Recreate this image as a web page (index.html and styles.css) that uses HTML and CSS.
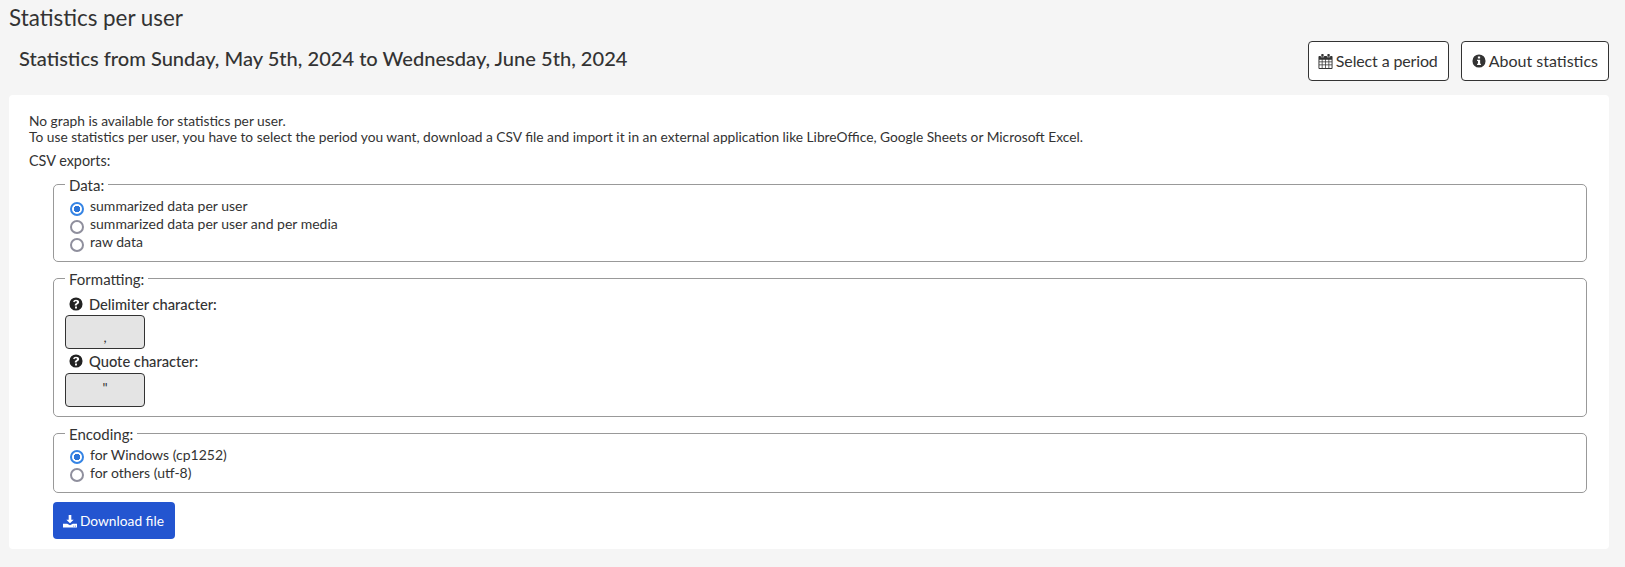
FILE: index.html
```html
<!DOCTYPE html>
<html lang="en">
<head>
<meta charset="utf-8">
<title>Statistics per user</title>
<link rel="stylesheet" href="styles.css">
</head>
<body>
<h1 class="page-title">Statistics per user</h1>
<div class="header-row">
  <h2 class="period-title">Statistics from Sunday, May 5th, 2024 to Wednesday, June 5th, 2024</h2>
  <div class="header-actions">
    <a class="btn btn-period" href="#"><svg class="icon" viewBox="0 0 16 16"><path fill="currentColor" fill-rule="evenodd" d="M4 0h1.500a.5.5 0 0 1 .5.5V3H3.500V.5A.5.5 0 0 1 4 0zm6.500 0H12a.5.5 0 0 1 .5.5V3H10V.5a.5.5 0 0 1 .5-.5zM1.500 2H3v1.500h3.500V2h3v1.500h3.500V2h1.500A1 1 0 0 1 15.500 3v12a1 1 0 0 1-1 1h-13a1 1 0 0 1-1-1V3a1 1 0 0 1 1-1zM1.500 6v2h2.500V6zm3.300 0v2h2.800V6zm3.600 0v2h2.800V6zm3.600 0v2h2.500V6zM1.500 8.800v2.400h2.500V8.800zm3.300 0v2.400h2.800V8.800zm3.600 0v2.400h2.800V8.800zm3.600 0v2.400h2.500V8.800zM1.500 12v3h2.500v-3zm3.300 0v3h2.800v-3zm3.600 0v3h2.800v-3zm3.600 0v3h2.500v-3z"/></svg>Select a period</a>
    <a class="btn btn-about" href="#"><svg class="icon icon-round" viewBox="0 0 16 16"><path fill="currentColor" fill-rule="evenodd" d="M8 .5a7.500 7.500 0 1 1 0 15 7.500 7.500 0 0 1 0-15zM6.700 2.800v2.400h2.600V2.800zM5.800 6.500v1.500h1v3H5.800v1.600h4.400V11H9.300V6.500z"/></svg>About statistics</a>
  </div>
</div>
<main class="panel">
  <p class="intro">No graph is available for statistics per user.<br>To use statistics per user, you have to select the period you want, download a CSV file and import it in an external application like LibreOffice, Google Sheets or Microsoft Excel.</p>
  <p class="exports">CSV exports:</p>
  <form class="export-form">
    <fieldset class="group group-data">
      <legend>Data:</legend>
      <label class="radio"><input type="radio" name="data" checked><span>summarized data per user</span></label>
      <label class="radio"><input type="radio" name="data"><span>summarized data per user and per media</span></label>
      <label class="radio"><input type="radio" name="data"><span>raw data</span></label>
    </fieldset>
    <fieldset class="group group-format">
      <legend>Formatting:</legend>
      <div class="field-label"><svg class="help" viewBox="0 0 16 16"><path fill="currentColor" fill-rule="evenodd" d="M8 .5a7.500 7.500 0 1 1 0 15 7.500 7.500 0 0 1 0-15zM8 3C6.300 3 5.100 3.900 4.600 5.200l1.500.9c.4-.8.900-1.300 1.800-1.300.7 0 1.300.4 1.300 1 0 .5-.4.800-1.100 1.200-.8.400-1.500 1-1.500 2.200v.4h2.200v-.2c0-.5.400-.8 1-1.200.9-.5 1.800-1.100 1.800-2.500C11.600 4 9.800 3 8 3zM6.900 10.800v2.200h2.200v-2.200z"/></svg><span>Delimiter character:</span></div>
      <input class="char-input char-low" type="text" value="," readonly>
      <div class="field-label field-label-tall"><svg class="help" viewBox="0 0 16 16"><path fill="currentColor" fill-rule="evenodd" d="M8 .5a7.500 7.500 0 1 1 0 15 7.500 7.500 0 0 1 0-15zM8 3C6.300 3 5.100 3.900 4.600 5.200l1.500.9c.4-.8.900-1.300 1.800-1.300.7 0 1.300.4 1.300 1 0 .5-.4.800-1.100 1.200-.8.400-1.500 1-1.500 2.200v.4h2.200v-.2c0-.5.400-.8 1-1.200.9-.5 1.800-1.100 1.800-2.500C11.600 4 9.800 3 8 3zM6.900 10.800v2.200h2.200v-2.200z"/></svg><span>Quote character:</span></div>
      <input class="char-input" type="text" value="&quot;" readonly>
    </fieldset>
    <fieldset class="group group-encoding">
      <legend>Encoding:</legend>
      <label class="radio"><input type="radio" name="enc" checked><span>for Windows (cp1252)</span></label>
      <label class="radio"><input type="radio" name="enc"><span>for others (utf-8)</span></label>
    </fieldset>
    <button class="btn-primary" type="button"><svg class="icon-dl" viewBox="0 0 16 16"><path fill="currentColor" fill-rule="evenodd" d="M6.500 1h3v5.500h2.700L8 10.700 3.800 6.500h2.700zM0 11h4.800L8 12.800 11.200 11H16v4.500H0zm11.800 2.300v1h1v-1zm2 0v1h1v-1z"/></svg>Download file</button>
  </form>
</main>
</body>
</html>
```
FILE: styles.css
```css
* { box-sizing: border-box; }
html, body { height: 100%; }
body {
  margin: 0;
  padding: 0 16px 0 9px;
  background: #f5f5f5;
  color: #333;
  font-family: Lato, "Liberation Sans", sans-serif;
  font-size: 13.76px;
  line-height: 16px;
  overflow: hidden;
}
.page-title {
  margin: 0;
  padding-top: 4px;
  height: 36px;
  font-size: 22.4px;
  line-height: 28px;
  font-weight: 400;
}
.header-row {
  display: flex;
  justify-content: space-between;
  align-items: flex-start;
  height: 59px;
}
.period-title {
  margin: 8px 0 0 10px;
  font-size: 20.08px;
  line-height: 28px;
  font-weight: 500;
}
.header-actions { display: flex; gap: 12px; padding-top: 5px; }
.btn {
  display: flex;
  align-items: center;
  height: 40px;
  padding: 0 10px 0 9px;
  border: 1px solid #333;
  border-radius: 4px;
  background: #fff;
  color: #333;
  font-size: 16px;
  text-decoration: none;
}
.btn-period { letter-spacing: -0.14px; }
.btn-about { padding-left: 10px; }
.icon { width: 15px; height: 15px; margin-right: 3px; flex: none; }
.icon-round { width: 14px; height: 14px; }
.panel {
  height: 454px;
  padding: 18px 20px 0;
  background: #fff;
  border-radius: 4px;
}
.intro { margin: 0; }
.exports { margin: 8px 0 0; font-size: 14.4px; }
.export-form { padding: 0 2px 0 24px; }
.group {
  margin: 0;
  padding: 7px 16px 9px;
  border: 1px solid #999;
  border-radius: 5px;
  min-width: 0;
}
.group legend {
  height: 14px;
  padding: 0 4px;
  margin-left: -5px;
  font-size: 15px;
  line-height: 16px;
}
.group-data { margin-top: 8px; padding-top: 6.500px; padding-bottom: 9.500px; }
.group-data .radio span { margin-bottom: 2px; }
.group-format { margin-top: 9px; padding-top: 8px; padding-bottom: 8px; }
.group-encoding { margin-top: 9px; padding-top: 6px; padding-bottom: 10px; }
.radio { display: flex; align-items: center; gap: 6px; height: 18px; font-size: 14px; line-height: 18px; }
.radio input {
  appearance: none;
  margin: 4px 0 0;
  width: 14px;
  height: 14px;
  border: 2px solid #8f8f9d;
  border-radius: 50%;
  background: #fff;
  flex: none;
}
.radio input:checked {
  border-color: #3584e4;
  background: radial-gradient(circle, #2b74d8 0 3px, #fff 3.500px);
}
.field-label {
  display: flex;
  align-items: center;
  height: 22px;
  font-size: 14.7px;
  font-weight: 500;
}
.field-label-tall { height: 23px; padding-bottom: 1px; }
.help { width: 14px; height: 14px; margin: 0 6px 0 -1px; flex: none; color: #222; }
.char-input {
  display: block;
  width: 80px;
  height: 34px;
  border: 1px solid #333;
  border-radius: 4px;
  background: #e4e4e4;
  color: #333;
  text-align: center;
  font-family: inherit;
  font-size: 13.76px;
  padding: 0 0 6px;
  margin: 0 0 1px -5px;
}
.char-low { padding: 8px 0 0; }
.btn-primary {
  display: flex;
  align-items: center;
  width: 122px;
  height: 37px;
  margin-top: 9px;
  padding: 0 0 0 10px;
  border: 0;
  border-radius: 4px;
  background: #2355d0;
  color: #fff;
  font-family: inherit;
  font-size: 13.76px;
}
.icon-dl { width: 14px; height: 14px; margin-right: 3px; flex: none; }
```
